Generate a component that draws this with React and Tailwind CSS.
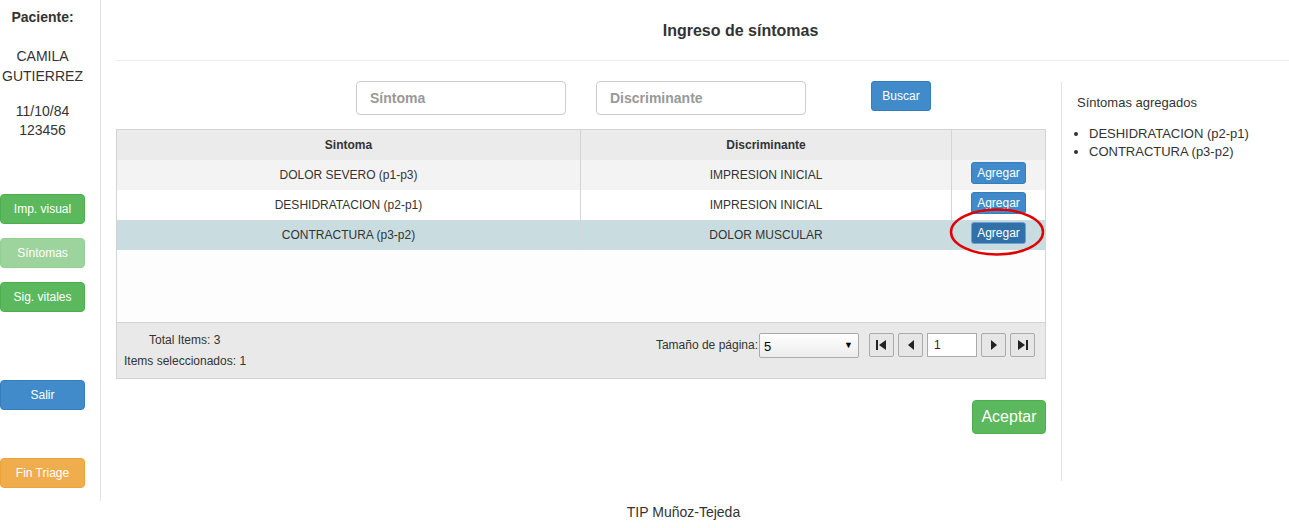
import React from 'react';

const rows = [
  { s: 'DOLOR SEVERO (p1-p3)', d: 'IMPRESION INICIAL', bg: 'bg-[#f3f3f3]' },
  { s: 'DESHIDRATACION (p2-p1)', d: 'IMPRESION INICIAL', bg: 'bg-white' },
  { s: 'CONTRACTURA (p3-p2)', d: 'DOLOR MUSCULAR', bg: 'bg-[#c9dde0]', active: true },
];

function NavBtn({ children }) {
  return (
    <div className="w-[25px] h-[24px] border border-[#aaa] rounded-[2px] bg-[#e6e6e6] flex items-center justify-center">
      {children}
    </div>
  );
}

export default function App() {
  return (
    <div className="relative w-[1289px] h-[528px] bg-white text-[#333] font-['Liberation_Sans',Arial,sans-serif]">
      <div className="flex">
        {/* sidebar */}
        <div className="w-[101px] h-[501px] pt-[4px] border-r border-[#e2e2e2] shrink-0">
          <div className="w-[85px] text-center text-[14px]">
            <div className="font-bold leading-[26px]">Paciente:</div>
            <div className="mt-[16px] leading-[20px]">CAMILA<br />GUTIERREZ</div>
            <div className="mt-[16px] leading-[19px]">11/10/84<br />123456</div>
          </div>
          <div className="w-[85px] mt-[54px] flex flex-col text-[12px] text-white">
            <div className="h-[30px] rounded-[4px] bg-[#5cb85c] border border-[#4cae4c] flex items-center justify-center">Imp. visual</div>
            <div className="mt-[14px] h-[30px] rounded-[4px] bg-[#9dd49d] border border-[#94cf94] flex items-center justify-center">Síntomas</div>
            <div className="mt-[14px] h-[30px] rounded-[4px] bg-[#5cb85c] border border-[#4cae4c] flex items-center justify-center">Sig. vitales</div>
            <div className="mt-[68px] h-[30px] rounded-[4px] bg-[#428bca] border border-[#357ebd] flex items-center justify-center">Salir</div>
            <div className="mt-[48px] h-[30px] rounded-[4px] bg-[#f0ad4e] border border-[#eea236] flex items-center justify-center">Fin Triage</div>
          </div>
        </div>

        {/* main */}
        <div className="flex-1 pl-[15px]">
          <div className="h-[61px] border-b border-[#eee] flex items-center justify-center pl-[76px]">
            <h1 className="text-[16px] font-bold text-[#333] pt-[2px]">Ingreso de síntomas</h1>
          </div>
          <div className="flex">
            <div className="w-[930px] shrink-0">
              <div className="flex mt-[20px] pl-[240px] items-start">
                <div className="w-[210px] h-[34px] border border-[#ccc] rounded-[4px] flex items-center pl-[13px] text-[14px] font-bold text-[#999]">Síntoma</div>
                <div className="ml-[30px] w-[210px] h-[34px] border border-[#ccc] rounded-[4px] flex items-center pl-[13px] text-[14px] font-bold text-[#999]">Discriminante</div>
                <div className="ml-[65px] w-[60px] h-[30px] rounded-[3px] bg-[#428bca] border border-[#357ebd] text-white text-[12px] flex items-center justify-center">Buscar</div>
              </div>

              <div className="mt-[14px] border border-[#d4d4d4] text-[12px]">
                <div className="flex h-[30px] bg-[#ebebeb] font-bold">
                  <div className="w-[464px] border-r border-[#d4d4d4] flex items-center justify-center">Sintoma</div>
                  <div className="w-[371px] border-r border-[#d4d4d4] flex items-center justify-center">Discriminante</div>
                  <div className="flex-1"></div>
                </div>
                {rows.map((r, i) => (
                  <div key={i} className={`flex h-[30px] ${r.bg}`}>
                    <div className="w-[464px] border-r border-[#d4d4d4] flex items-center justify-center pb-[1px]">{r.s}</div>
                    <div className="w-[371px] border-r border-[#d4d4d4] flex items-center justify-center pb-[1px]">{r.d}</div>
                    <div className="flex-1 pl-[19px] pt-[2px]">
                      <div className={`w-[55px] h-[22px] rounded-[3px] text-white flex items-center justify-center ${r.active ? 'bg-[#3071a9] border border-[#6ea1cf]' : 'bg-[#428bca] border border-[#357ebd]'}`}>Agregar</div>
                    </div>
                  </div>
                ))}
                <div className="h-[72px] bg-[#fdfdfd]"></div>
                <div className="h-[56px] bg-[#e9e9e9] border-t border-[#d4d4d4] flex">
                  <div className="pl-[7px] pt-[10px]">
                    <div className="pl-[25px] leading-[15px]">Total Items: 3</div>
                    <div className="mt-[6px] leading-[15px]">Items seleccionados: 1</div>
                  </div>
                  <div className="ml-auto mr-[10px] pt-[10px] flex items-start">
                    <div className="mt-[3px] mr-[1px]">Tamaño de página:</div>
                    <div className="w-[100px] h-[25px] border border-[#aaa] rounded-[2px] bg-gradient-to-b from-white to-[#ececec] flex items-center pl-[4px] pr-[5px] text-[13px] text-black">
                      <span className="mt-[2px]">5</span>
                      <span className="ml-auto text-[9px]">▼</span>
                    </div>
                    <div className="ml-[10px] flex gap-[4px]">
                      <NavBtn>
                        <svg width="13" height="12" viewBox="0 0 13 12"><rect x="1" y="1" width="2" height="10" fill="#222" /><polygon points="11,1 11,11 4,6" fill="#222" /></svg>
                      </NavBtn>
                      <NavBtn>
                        <svg width="10" height="12" viewBox="0 0 10 12"><polygon points="8,1 8,11 2,6" fill="#222" /></svg>
                      </NavBtn>
                      <div className="w-[50px] h-[24px] border border-[#aaa] bg-white flex items-center pl-[6px] text-[12px] text-[#5a1010]">1</div>
                      <NavBtn>
                        <svg width="10" height="12" viewBox="0 0 10 12"><polygon points="2,1 2,11 8,6" fill="#222" /></svg>
                      </NavBtn>
                      <NavBtn>
                        <svg width="13" height="12" viewBox="0 0 13 12"><polygon points="2,1 2,11 9,6" fill="#222" /><rect x="10" y="1" width="2" height="10" fill="#222" /></svg>
                      </NavBtn>
                    </div>
                  </div>
                </div>
              </div>

              <div className="flex justify-end mt-[21px]">
                <div className="w-[74px] h-[34px] rounded-[4px] bg-[#5cb85c] border border-[#4cae4c] text-white text-[16px] flex items-center justify-center">Aceptar</div>
              </div>
            </div>

            <div className="ml-[15px] mt-[21px] h-[399px] border-l border-[#e2e2e2] pl-[15px] pt-[13px] text-[13px] text-[#333]">
              <div className="leading-[16px]">Síntomas agregados</div>
              <ul className="mt-[14px] list-disc pl-[12px] leading-[18px]">
                <li>DESHIDRATACION (p2-p1)</li>
                <li>CONTRACTURA (p3-p2)</li>
              </ul>
            </div>
          </div>
        </div>
      </div>

      <div className="pl-[78px] text-center text-[14px] text-[#333] mt-[1px]">TIP Muñoz-Tejeda</div>

      <svg className="absolute left-[948px] top-[208px] pointer-events-none" width="98" height="50" viewBox="0 0 98 50">
        <ellipse cx="49" cy="24" rx="46" ry="22.5" fill="none" stroke="#e00000" strokeWidth="2.5" />
      </svg>
    </div>
  );
}
